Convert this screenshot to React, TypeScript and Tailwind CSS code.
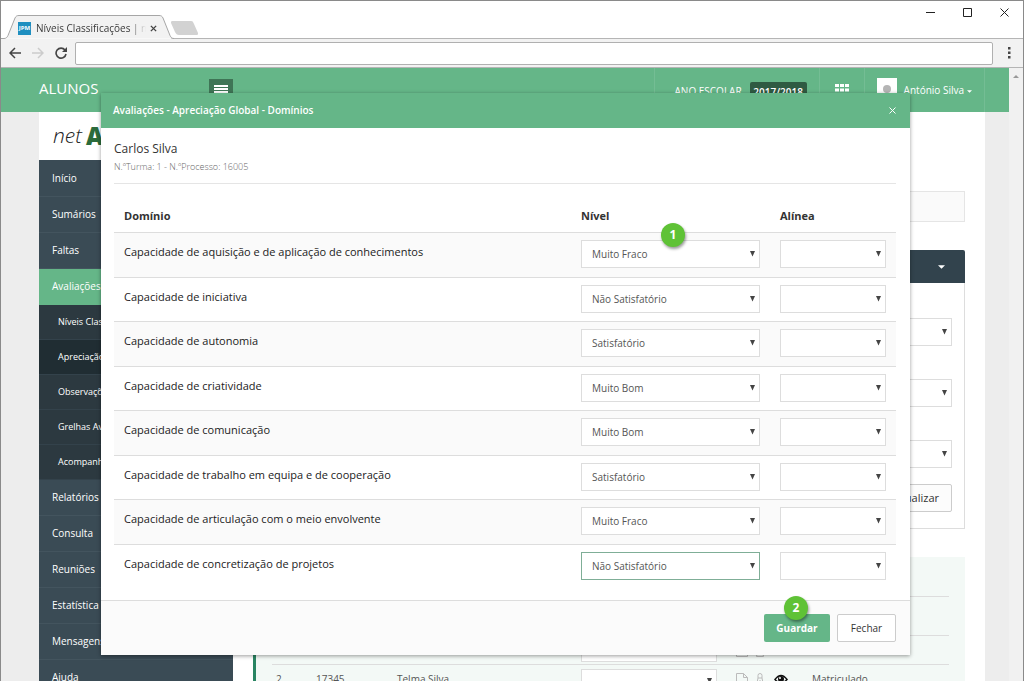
import { useState, type ReactNode } from 'react';

const levels = ['Muito Fraco', 'Não Satisfatório', 'Satisfatório', 'Muito Bom'];

const domains = [
    { name: 'Capacidade de aquisição e de aplicação de conhecimentos', level: 'Muito Fraco' },
    { name: 'Capacidade de iniciativa', level: 'Não Satisfatório' },
    { name: 'Capacidade de autonomia', level: 'Satisfatório' },
    { name: 'Capacidade de criatividade', level: 'Muito Bom' },
    { name: 'Capacidade de comunicação', level: 'Muito Bom' },
    { name: 'Capacidade de trabalho em equipa e de cooperação', level: 'Satisfatório' },
    { name: 'Capacidade de articulação com o meio envolvente', level: 'Muito Fraco' },
    { name: 'Capacidade de concretização de projetos', level: 'Não Satisfatório' },
];

const menu = [
    { label: 'Início' },
    { label: 'Sumários' },
    { label: 'Faltas' },
    {
        label: 'Avaliações',
        children: ['Níveis Classificações', 'Apreciação Global', 'Observações', 'Grelhas Avaliação', 'Acompanhamento'],
    },
    { label: 'Relatórios' },
    { label: 'Consulta' },
    { label: 'Reuniões' },
    { label: 'Estatística' },
    { label: 'Mensagens' },
    { label: 'Ajuda' },
];

interface SelectBoxProps {
    label: string;
    value?: string;
    options?: string[];
    active?: boolean;
    compact?: boolean;
    onChange?: (value: string) => void;
}

function SelectBox({ label, value = '', options = [], active = false, compact = false, onChange }: SelectBoxProps) {
    return (
        <div className={`relative flex items-center ${compact ? 'h-6' : 'h-7'}`}>
            <select
                aria-label={label}
                value={value}
                onChange={(e) => onChange?.(e.target.value)}
                className={`block h-full w-full appearance-none border bg-white pl-[10px] pr-5 pt-px text-[10px] text-[#555] focus:outline-none ${
                    active ? 'border-[#7fae97]' : 'border-[#ddd]'
                }`}
            >
                <option value=""></option>
                {options.map((option) => (
                    <option key={option}>{option}</option>
                ))}
            </select>
            <svg viewBox="0 0 5 6" className="pointer-events-none absolute right-[5px] h-[6px] w-[5px]" fill="#444">
                <path d="M0 0h5L2.500 5.500z" />
            </svg>
        </div>
    );
}

function StepBadge({ children }: { children: ReactNode }) {
    return (
        <span className="flex size-6 items-center justify-center rounded-full bg-[#5fc236] text-xs font-bold text-white shadow-[1px_2px_3px_rgba(0,0,0,0.4)]">
            {children}
        </span>
    );
}

function BrowserChrome() {
    return (
        <div className="shrink-0">
            {/* Title bar */}
            <div className="relative flex h-[38px] items-end bg-white">
                <svg className="absolute bottom-0 left-0 h-6 w-full" fill="none">
                    <path d="M170 23.500H4000" stroke="#b5b5b5" />
                    <path d="M0 23.500h3c2 0 3-1 4-3L14 3c1-2 2-2.500 4-2.500h140c2 0 3 .5 4 2.500l7 17.500c1 2 2 3 4 3" fill="#f2f2f2" stroke="#a6a6a6" />
                    <path d="M171 6h19c2 0 2 1 3 3l4 9c0 1 0 2-1 2h-18c-2 0-3-1-4-3l-4-9c0-1 0-2 1-2z" fill="#d2d2d2" />
                </svg>
                <div className="relative flex h-[22px] w-[158px] items-center pl-[17px]">
                    <span className="flex size-[13px] items-center justify-center bg-[#1f8fc0] text-[6px] font-bold text-white">JPM</span>
                    <span className="ml-[5px] w-[110px] overflow-hidden whitespace-nowrap bg-linear-to-r from-[#333] from-85% to-transparent bg-clip-text text-[10px] text-transparent">
                        Níveis Classificações | netAlunos
                    </span>
                    <button aria-label="Fechar separador" className="ml-1">
                        <svg viewBox="0 0 8 8" className="size-[7px]" stroke="#444" strokeWidth="1.6">
                            <path d="M1 1l6 6M7 1L1 7" />
                        </svg>
                    </button>
                </div>
                <div className="ml-auto flex gap-7 self-start pr-[14px] pt-[7px] text-[#222]">
                    <button aria-label="Minimizar">
                        <svg viewBox="0 0 9 9" className="size-[9px]" stroke="currentColor"><path d="M0 4.500h9" /></svg>
                    </button>
                    <button aria-label="Maximizar">
                        <svg viewBox="0 0 9 9" className="size-[9px]" stroke="currentColor" fill="none"><path d="M.5.5h8v8h-8z" /></svg>
                    </button>
                    <button aria-label="Fechar janela">
                        <svg viewBox="0 0 9 9" className="size-[9px]" stroke="currentColor"><path d="M.5.5l8 8M8.500.5l-8 8" /></svg>
                    </button>
                </div>
            </div>
            {/* Address bar */}
            <div className="flex h-[29px] items-center border-b border-[#b5b5b5] bg-[#f2f2f2] pl-2 pr-3">
                <button aria-label="Recuar">
                    <svg viewBox="0 0 12 12" className="size-3" fill="none" stroke="#444" strokeWidth="1.5"><path d="M12 6H1.500M6 1L1 6l5 5" /></svg>
                </button>
                <button aria-label="Avançar" className="ml-[11px]">
                    <svg viewBox="0 0 12 12" className="size-3" fill="none" stroke="#ccc" strokeWidth="1.5"><path d="M0 6h10.500M6 1l5 5-5 5" /></svg>
                </button>
                <button aria-label="Recarregar" className="ml-[11px]">
                    <svg viewBox="0 0 12 12" className="size-3" fill="none" stroke="#444" strokeWidth="1.6"><path d="M10 3A5 5 0 1 0 11 7" /><path d="M12 0v5H7z" fill="#444" stroke="none" /></svg>
                </button>
                <input aria-label="Endereço" className="ml-2 h-[23px] min-w-0 flex-1 rounded-[2px] border border-[#b0b0b0] bg-white px-2 text-[11px]" />
                <button aria-label="Menu do navegador" className="ml-[15px]">
                    <svg viewBox="0 0 3 12" className="h-3 w-[3px]" fill="#444"><path d="M0 0h2.500v2.500H0zM0 4.500h2.500V7H0zM0 9h2.500v2.500H0z" /></svg>
                </button>
            </div>
        </div>
    );
}

function TopBar() {
    return (
        <header className="flex h-11 items-start bg-[#65b688] pl-[38px] pr-6 text-white">
            <span className="w-[170px] pt-2 text-[15px] leading-6">ALUNOS</span>
            <button aria-label="Alternar menu" className="mt-[11px] flex h-5 w-6 flex-col items-center justify-center gap-px bg-[#3f7556]">
                <span className="h-[2px] w-[14px] bg-white" />
                <span className="h-[2px] w-[14px] bg-white" />
                <span className="h-[2px] w-[14px] bg-white" />
            </button>
            <div className="ml-auto flex h-full text-[10px]">
                <div className="flex items-start border-l border-white/10 pl-5 pr-3">
                    <span className="pt-[15px] leading-4">ANO ESCOLAR</span>
                    <button className="ml-2 mt-[14px] h-5 w-[57px] rounded-[2px] bg-[#2f5a42] font-semibold">2017/2018</button>
                </div>
                <button aria-label="Aplicações" className="flex w-[45px] items-start justify-center border-l border-white/10 pt-4">
                    <svg viewBox="0 0 14 12" className="h-3 w-[14px]" fill="#fff">
                        <path d="M0 0h4v3H0zM5 0h4v3H5zM10 0h4v3h-4zM0 4.500h4v3H0zM5 4.500h4v3H5zM10 4.500h4v3h-4zM0 9h4v3H0zM5 9h4v3H5zM10 9h4v3h-4z" />
                    </svg>
                </button>
                <button className="flex items-start border-x border-white/10 px-3">
                    <svg viewBox="0 0 20 20" className="mt-[10px] size-5">
                        <path d="M0 0h20v20H0z" fill="#fff" />
                        <circle cx="10" cy="11" r="4" fill="#b5b5b5" />
                        <path d="M3 20q1-5 7-5t7 5z" fill="#b5b5b5" />
                    </svg>
                    <span className="ml-[7px] pt-[14px] leading-4">António Silva</span>
                    <svg viewBox="0 0 6 3" className="ml-[3px] mt-[22px] h-[3px] w-[5px]" fill="#fff"><path d="M0 0h6L3 3z" /></svg>
                </button>
            </div>
        </header>
    );
}

function Sidebar() {
    return (
        <aside className="w-[194px] shrink-0 self-stretch bg-[#3a4b55]">
            <div className="flex h-12 items-center bg-white pl-[14px] text-[21px]">
                <span className="font-light italic text-[#222]">net</span>
                <span className="ml-1 text-[24px] font-extrabold text-[#2b6b3b]">Alunos</span>
            </div>
            <nav className="pt-px text-[10px] text-white">
                {menu.map((item) => (
                    <div key={item.label}>
                        <a
                            href="#"
                            className={`flex h-9 items-center border-b pl-[13px] ${
                                item.children ? 'border-[#65b688] bg-[#65b688]' : 'border-[#43545e]'
                            }`}
                        >
                            {item.label}
                        </a>
                        {item.children?.map((child, i) => (
                            <a
                                key={child}
                                href="#"
                                className={`flex h-[35px] items-center border-b border-[#33424b] pl-[19px] text-[9px] ${
                                    i === 1 ? 'bg-[#202d33]' : 'bg-[#2c3940]'
                                }`}
                            >
                                {child}
                            </a>
                        ))}
                    </div>
                ))}
            </nav>
        </aside>
    );
}

function StudentRow({ number, process, name }: { number: string; process: string; name: string }) {
    return (
        <tr className="h-[29px] border-t border-[#ddd] align-top last:h-[34px]">
            <td className="pl-1 pt-[6px]">{number}</td>
            <td className="pt-[6px]">{process}</td>
            <td className="pt-[6px]">{name}</td>
            <td className="align-middle">
                <div className="w-[136px]">
                    <SelectBox label={`Nível de ${name}`} compact />
                </div>
            </td>
            <td>
                <div className="flex items-center gap-2 pt-2">
                    <svg viewBox="0 0 12 13" className="h-[13px] w-3" fill="none" stroke="#bbb"><path d="M.5.5h7l4 4v8H.5zM7.500.5v4h4M3 8.500h6" /></svg>
                    <svg viewBox="0 0 8 13" className="h-[13px] w-2" fill="none" stroke="#bbb"><path d="M2 5V2.500a2 2 0 0 1 4 0V5l1.500 7.500h-7zM4 7v3M2 5h4" /></svg>
                    <svg viewBox="0 0 14 10" className="ml-[2px] h-[10px] w-[14px]">
                        <path d="M1 5.500Q7-2.500 13 5.500Q7 12 1 5.500z" fill="none" stroke="#111" strokeWidth="1.500" />
                        <circle cx="7" cy="5" r="3" fill="#111" />
                        <circle cx="6" cy="4" r="1" fill="#fff" />
                    </svg>
                </div>
            </td>
            <td className="pt-[6px]">Matriculado</td>
        </tr>
    );
}

function PageContent() {
    return (
        <main className="min-w-0 flex-1 bg-white px-5 pt-[79px]">
            <div className="h-[31px] border border-[#e5e5e5] bg-[#fafafa]" />
            <section className="mt-7">
                <div className="flex h-[33px] items-center justify-end rounded-t-[2px] bg-[#32434d] pr-5">
                    <svg viewBox="0 0 8 4" className="h-1 w-[7px]" fill="#fff"><path d="M0 0h8L4 4z" /></svg>
                </div>
                <div className="border border-t-0 border-[#ddd] px-3 pb-4 pt-[35px]">
                    <div className="flex flex-col gap-[33px]">
                        <SelectBox label="Turma" />
                        <SelectBox label="Disciplina" />
                        <SelectBox label="Período" />
                    </div>
                    <div className="mt-4 flex justify-end">
                        <button className="h-7 rounded-[2px] border border-[#ccc] bg-[#fcfcfc] px-3 text-[11px] text-[#333]">Atualizar</button>
                    </div>
                </div>
            </section>
            <div className="mt-7 border-l-[3px] border-[#2a8563] bg-[#f3f9f6] px-4">
                <table className="w-full border-collapse text-[10px] leading-4 text-[#555]">
                    <colgroup>
                        <col className="w-[44px]" />
                        <col className="w-[81px]" />
                        <col className="w-[184px]" />
                        <col className="w-[155px]" />
                        <col className="w-[76px]" />
                        <col />
                    </colgroup>
                    <thead>
                        <tr className="h-[39px]"><th colSpan={6} /></tr>
                        <tr className="h-[39px] border-t border-[#ddd]"><th colSpan={6} /></tr>
                    </thead>
                    <tbody>
                        <StudentRow number="1" process="16005" name="Carlos Silva" />
                        <StudentRow number="2" process="17345" name="Telma Silva" />
                    </tbody>
                </table>
            </div>
        </main>
    );
}

function DomainsDialog() {
    const [values, setValues] = useState(domains.map((d) => d.level));

    const setLevel = (index: number, value: string) => {
        setValues(values.map((v, i) => (i === index ? value : v)));
    };

    return (
        <div role="dialog" aria-labelledby="dialog-title" className="bg-white shadow-[0_1px_4px_rgba(0,0,0,0.4)]">
            <div className="flex h-[35px] items-center justify-between bg-[#65b688] pl-3 pr-[14px] text-white">
                <h2 id="dialog-title" className="text-[10px] font-semibold">Avaliações - Apreciação Global - Domínios</h2>
                <button aria-label="Fechar">
                    <svg viewBox="0 0 7 7" className="size-[7px]" stroke="#fff"><path d="M.5.5l6 6M6.500.5l-6 6" /></svg>
                </button>
            </div>
            <div className="pb-3 pl-[13px] pr-[14px] pt-3">
                <h3 className="text-[12px] leading-[18px] text-[#333]">Carlos Silva</h3>
                <p className="text-[9px] font-light leading-[18px] text-[#666]">N.ºTurma: 1 - N.ºProcesso: 16005</p>
                <hr className="mt-[7px] border-[#e5e5e5]" />
                <table className="mt-4 w-full table-fixed border-collapse text-left text-[11px]">
                    <thead>
                        <tr className="h-8 text-[#333]">
                            <th className="px-[10px] font-bold">Domínio</th>
                            <th className="w-[199px] px-[10px] font-bold">Nível</th>
                            <th className="w-[126px] px-[10px] font-bold">Alínea</th>
                        </tr>
                    </thead>
                    <tbody>
                        {domains.map((domain, i) => (
                            <tr key={domain.name} className="border-t border-[#ddd] align-top odd:h-[45px] odd:bg-[#fafafa] even:h-11">
                                <td className="px-[10px] pt-[7px] font-medium leading-6 text-[#222]">{domain.name}</td>
                                <td className="relative px-[10px] pt-[7px]">
                                    <SelectBox
                                        label={`Nível: ${domain.name}`}
                                        value={values[i]}
                                        options={levels}
                                        active={i === domains.length - 1}
                                        onChange={(value) => setLevel(i, value)}
                                    />
                                    {i === 0 && (
                                        <div className="absolute -top-[10px] left-[90px]">
                                            <StepBadge>1</StepBadge>
                                        </div>
                                    )}
                                </td>
                                <td className="px-[10px] pt-[7px]">
                                    <SelectBox label={`Alínea: ${domain.name}`} />
                                </td>
                            </tr>
                        ))}
                    </tbody>
                </table>
            </div>
            <div className="flex justify-end gap-[7px] border-t border-[#ddd] bg-[#fbfbfb] px-[14px] py-[13px] text-[10px]">
                <div className="relative">
                    <button className="h-7 w-[66px] rounded-[2px] bg-[#65b688] font-bold text-white">Guardar</button>
                    <div className="absolute -top-[18px] left-5">
                        <StepBadge>2</StepBadge>
                    </div>
                </div>
                <button className="h-7 w-[59px] rounded-[2px] border border-[#ccc] bg-white text-[#333]">Fechar</button>
            </div>
        </div>
    );
}

export default function App() {
    return (
        <div className="flex h-screen flex-col overflow-hidden border-x border-t border-[#8a8a8a] bg-white font-['Open_Sans',sans-serif]">
            <BrowserChrome />
            <div className="flex min-h-0 flex-1">
                <div className="relative min-w-0 flex-1 overflow-hidden bg-[#ededed]">
                    <TopBar />
                    <div className="ml-[38px] mr-6 flex">
                        <Sidebar />
                        <PageContent />
                    </div>
                    <div className="absolute left-[100px] right-[99px] top-[25px]">
                        <DomainsDialog />
                    </div>
                </div>
                {/* Page scrollbar */}
                <div className="flex w-[14px] justify-center bg-[#f1f1f1] pt-[7px]">
                    <svg viewBox="0 0 6 3" className="h-[3px] w-[6px]" fill="#999"><path d="M3 0l3 3H0z" /></svg>
                </div>
            </div>
        </div>
    );
}
